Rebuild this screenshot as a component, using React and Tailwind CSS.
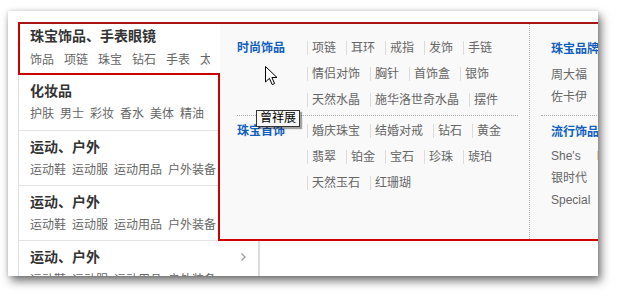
import React from 'react';

const menu = [
  { title: '珠宝饰品、手表眼镜', subs: ['饰品', '项链', '珠宝', '钻石', '手表', '太阳镜'], active: true },
  { title: '化妆品', subs: ['护肤', '男士', '彩妆', '香水', '美体', '精油'], tall: true },
  { title: '运动、户外', subs: ['运动鞋', '运动服', '运动用品', '户外装备'] },
  { title: '运动、户外', subs: ['运动鞋', '运动服', '运动用品', '户外装备'] },
  { title: '运动、户外', subs: ['运动鞋', '运动服', '运动用品', '户外装备'] },
];

const groups = [
  {
    name: '时尚饰品',
    items: ['项链', '耳环', '戒指', '发饰', '手链', '情侣对饰', '胸针', '首饰盒', '银饰', '天然水晶', '施华洛世奇水晶', '摆件'],
  },
  {
    name: '珠宝首饰',
    items: ['婚庆珠宝', '结婚对戒', '钻石', '黄金', '翡翠', '铂金', '宝石', '珍珠', '琥珀', '天然玉石', '红珊瑚'],
  },
];

const brands = [
  { name: '珠宝品牌', rows: [['周大福'], ['佐卡伊']] },
  { name: '流行饰品', rows: [["She's", 'MaBelle'], ['银时代'], ['Special']] },
];

function Chevron() {
  return (
    <svg width="5" height="8" viewBox="0 0 5 8" className="mr-[12px]">
      <path d="M0.5 0.5 L4 4 L0.5 7.5" fill="none" stroke="#999" strokeWidth="1.2" />
    </svg>
  );
}

function SideItem({ item }) {
  if (item.active) {
    return (
      <div className="relative z-10 -ml-px h-[53px] w-[202px] border-2 border-r-0 border-[#cc0000] border-t-[#a81414] bg-white pl-[10px] pt-[3px]">
        <div className="text-[14px] font-bold leading-[18px] text-[#333]">{item.title}</div>
        <div className="mt-[6px] flex w-[180px] gap-[10px] overflow-hidden whitespace-nowrap text-[12px] leading-[18px] text-[#666]">
          {item.subs.map((s, i) => (
            <span key={i}>{s}</span>
          ))}
        </div>
      </div>
    );
  }
  return (
    <div className={`${item.tall ? 'h-[56px]' : 'h-[55px]'} border-b border-[#e3e3e3] pl-[11px] pt-[7px]`}>
      <div className="flex items-center justify-between">
        <span className="text-[14px] font-bold leading-[18px] text-[#333]">{item.title}</span>
        <Chevron />
      </div>
      <div className="mt-[5px] flex gap-[6px] overflow-hidden whitespace-nowrap text-[12px] leading-[18px] text-[#666]">
        {item.subs.map((s, i) => (
          <span key={i}>{s}</span>
        ))}
      </div>
    </div>
  );
}

function Popup() {
  return (
    <div className="absolute left-[210px] top-[11px] flex h-[219px] w-[440px] border-2 border-[#cc0000] border-t-[#a81414] bg-[#f9f9f9]">
      {/* categories */}
      <div className="w-[309px] pl-[17px] pr-[11px] pt-[11px]">
        {groups.map((g, gi) => (
          <div
            key={g.name}
            className={gi === 0 ? 'flex border-b border-dotted border-[#aaa] pb-[2px]' : 'flex pt-[2px]'}
          >
            <div className="w-[70px] text-[12px] font-bold leading-[26px] text-[#105ebe]">{g.name}</div>
            <div className="flex w-[211px] flex-wrap">
              {g.items.map((it) => (
                <span
                  key={it}
                  className="my-[6px] h-[14px] border-l border-[#dcdcdc] pl-[4px] pr-[10px] text-[12px] leading-[14px] text-[#666] whitespace-nowrap"
                >
                  {it}
                </span>
              ))}
            </div>
          </div>
        ))}
      </div>
      {/* brands */}
      <div className="w-[120px] border-l border-dotted border-[#aaa] pl-[11px] pt-[12px]">
        {brands.map((b, bi) => (
          <div
            key={b.name}
            className={bi === 0 ? 'border-b border-dotted border-[#aaa] pb-[7px] pl-[10px]' : 'pl-[10px] pt-[3px]'}
          >
            <div className="h-[26px] text-[12px] font-bold leading-[26px] text-[#105ebe] whitespace-nowrap">{b.name}</div>
            <div className={bi === 0 ? 'mt-[2px]' : ''}>
              {b.rows.map((r, ri) => (
                <div key={ri} className="flex gap-[16px] text-[12px] leading-[22px] text-[#666] whitespace-nowrap">
                  {r.map((t) => (
                    <span key={t}>{t}</span>
                  ))}
                </div>
              ))}
            </div>
          </div>
        ))}
      </div>
    </div>
  );
}

export default function App() {
  return (
    <div className="relative h-[302px] w-[628px] overflow-hidden bg-white pl-[8px] pt-[11px] font-['Liberation_Sans','Noto_Sans_CJK_SC',sans-serif]">
      <div className="relative h-[265px] w-[590px] overflow-hidden bg-white pl-[10px] pt-[11px] shadow-[3px_5px_9px_rgba(0,0,0,0.55),0_0_4px_rgba(0,0,0,0.15)]">
        <div className="h-[300px] w-[242px] border-l border-r-2 border-l-[#e0e0e0] border-r-[#dcdcdc]">
          {menu.map((m, i) => (
            <SideItem key={i} item={m} />
          ))}
        </div>
        <Popup />
      </div>

      {/* mouse cursor */}
      <svg className="absolute left-[265px] top-[66px]" width="13" height="20" viewBox="0 0 13 20">
        <path
          d="M0.5 0.5 L0.5 16 L4.4 12.3 L7.2 18.6 L9.6 17.6 L6.9 11.5 L12 11.5 Z"
          fill="#fff"
          stroke="#000"
          strokeWidth="1"
          strokeLinejoin="miter"
        />
      </svg>

      {/* tooltip */}
      <div className="absolute left-[256px] top-[110px] h-[17px] border border-[#333] bg-[#f6f6f6] px-[3px] text-[12px] leading-[15px] text-black shadow-[2px_2px_1px_rgba(0,0,0,0.35)]">
        曾祥展
      </div>
    </div>
  );
}
